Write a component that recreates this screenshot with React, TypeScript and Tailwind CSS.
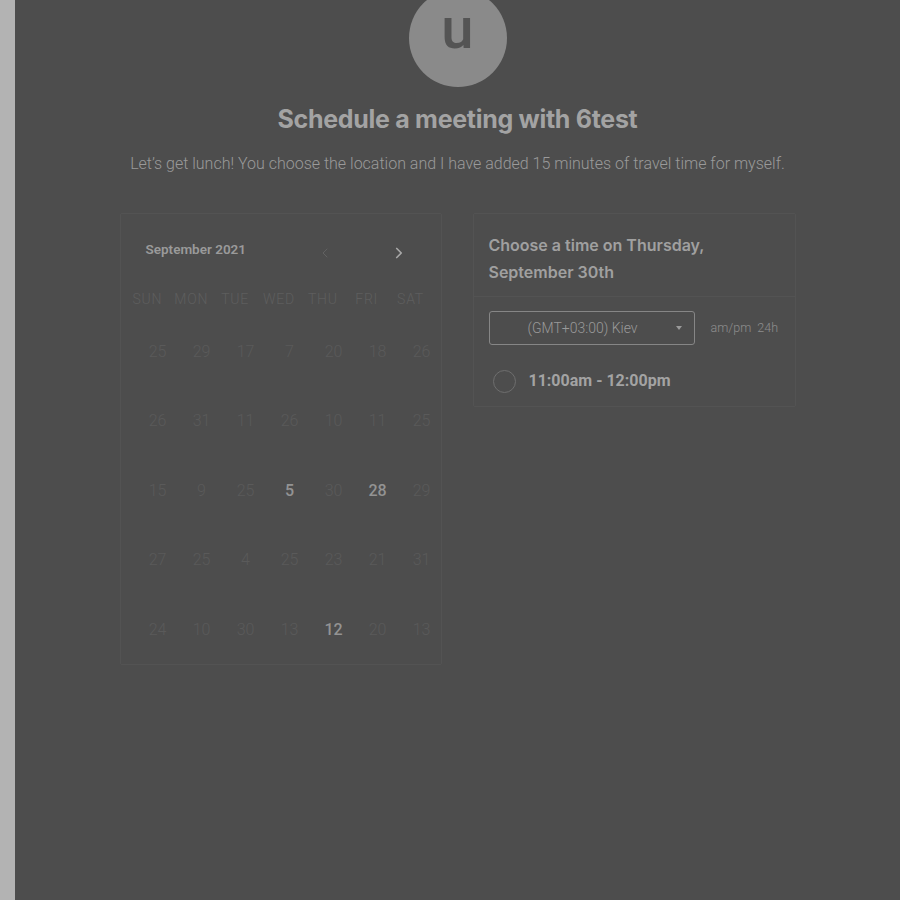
import { ChevronLeft, ChevronRight } from 'lucide-react';

const weekdays = ['SUN', 'MON', 'TUE', 'WED', 'THU', 'FRI', 'SAT'];

const rows: { n: number; on?: boolean }[][] = [
  [{ n: 25 }, { n: 29 }, { n: 17 }, { n: 7 }, { n: 20 }, { n: 18 }, { n: 26 }],
  [{ n: 26 }, { n: 31 }, { n: 11 }, { n: 26 }, { n: 10 }, { n: 11 }, { n: 25 }],
  [{ n: 15 }, { n: 9 }, { n: 25 }, { n: 5, on: true }, { n: 30 }, { n: 28, on: true }, { n: 29 }],
  [{ n: 27 }, { n: 25 }, { n: 4 }, { n: 25 }, { n: 23 }, { n: 21 }, { n: 31 }],
  [{ n: 24 }, { n: 10 }, { n: 30 }, { n: 13 }, { n: 12, on: true }, { n: 20 }, { n: 13 }],
];

function CalendarCard() {
  return (
    <div className="w-[322px] h-[452px] border border-[#535353] rounded-[2px] px-[5px]">
      <div className="h-[70px] flex items-center">
        <span className="ml-[20px] w-[170px] text-[13.5px] font-semibold text-[#9a9a9a]">September 2021</span>
        <ChevronLeft className="w-[16px] h-[16px] ml-[1px] mt-[8px] text-[#626262]" strokeWidth={1.5} />
        <ChevronRight className="w-[18px] h-[18px] ml-[57px] mt-[8px] text-[#a8a8a8]" strokeWidth={2.2} />
      </div>
      <div className="grid grid-cols-7 w-[307px] h-[30px] items-center">
        {weekdays.map(d => (
          <span key={d} className="text-center text-[14px] font-light tracking-[0.8px] text-[#5e5e5e]">{d}</span>
        ))}
      </div>
      <div className="pt-[3px]">
        {rows.map((r, i) => (
          <div key={i} className="grid grid-cols-7 w-[308px] ml-[10px] h-[69.5px] items-center">
            {r.map((c, j) => (
              <span
                key={j}
                className={c.on ? 'text-center text-[16px] font-medium text-[#939393]' : 'text-center text-[16px] font-light text-[#5a5a5a]'}
              >
                {c.n}
              </span>
            ))}
          </div>
        ))}
      </div>
    </div>
  );
}

function TimeCard() {
  return (
    <div className="w-[323px] border border-[#535353] rounded-[2px]">
      <div className="px-[15px] pt-[18px] pb-[10px] border-b border-[#535353]">
        <p className="font-['Inter'] text-[16px] leading-[27px] font-semibold text-[#a0a0a0]">
          Choose a time on Thursday,
          <br />
          September 30th
        </p>
      </div>
      <div className="pl-[15px] pr-[12px] pt-[14px] pb-[7px]">
        <div className="flex items-center">
          <div className="w-[206px] h-[34px] border border-[#868686] rounded-[3px] flex items-center pl-[38px] pr-[12px]">
            <span className="flex-1 text-[14px] font-light text-[#9a9a9a]">(GMT+03:00) Kiev</span>
            <span className="w-0 h-0 border-l-[3px] border-r-[3px] border-t-[4px] border-l-transparent border-r-transparent border-t-[#9a9a9a]" />
          </div>
          <span className="ml-[16px] text-[12.5px] font-light text-[#8e8e8e] whitespace-pre">am/pm  24h</span>
        </div>
        <div className="flex items-center h-[36px] mt-[18px]">
          <span className="ml-[4px] w-[23px] h-[23px] rounded-full border-[1.5px] border-[#6e6e6e]" />
          <span className="ml-[13px] text-[16px] font-bold text-[#a3a3a3]">11:00am - 12:00pm</span>
        </div>
      </div>
    </div>
  );
}

export default function App() {
  return (
    <div className="flex w-[900px] h-[900px] overflow-hidden bg-[#4d4d4d] font-['Roboto',sans-serif]">
      <div className="w-[15px] shrink-0 bg-[#b3b3b3]" />
      <div className="flex-1 flex flex-col items-center">
        <div className="-mt-[11px] w-[98px] h-[98px] shrink-0 rounded-full bg-[#8a8a8a] flex justify-center pt-[19px]">
          <span className="h-[40px] text-[58px] leading-[40px] font-medium text-[#545454]">u</span>
        </div>
        <h1 className="mt-[16px] font-['Inter'] text-[25px] leading-[32px] font-bold tracking-[-0.3px] text-[#a3a3a3]">
          Schedule a meeting with 6test
        </h1>
        <p className="mt-[17px] text-[16px] leading-[24px] font-light text-[#9a9a9a]">
          Let&rsquo;s get lunch! You choose the location and I have added 15 minutes of travel time for myself.
        </p>
        <div className="mt-[37px] flex items-start gap-[31px]">
          <CalendarCard />
          <TimeCard />
        </div>
      </div>
    </div>
  );
}
